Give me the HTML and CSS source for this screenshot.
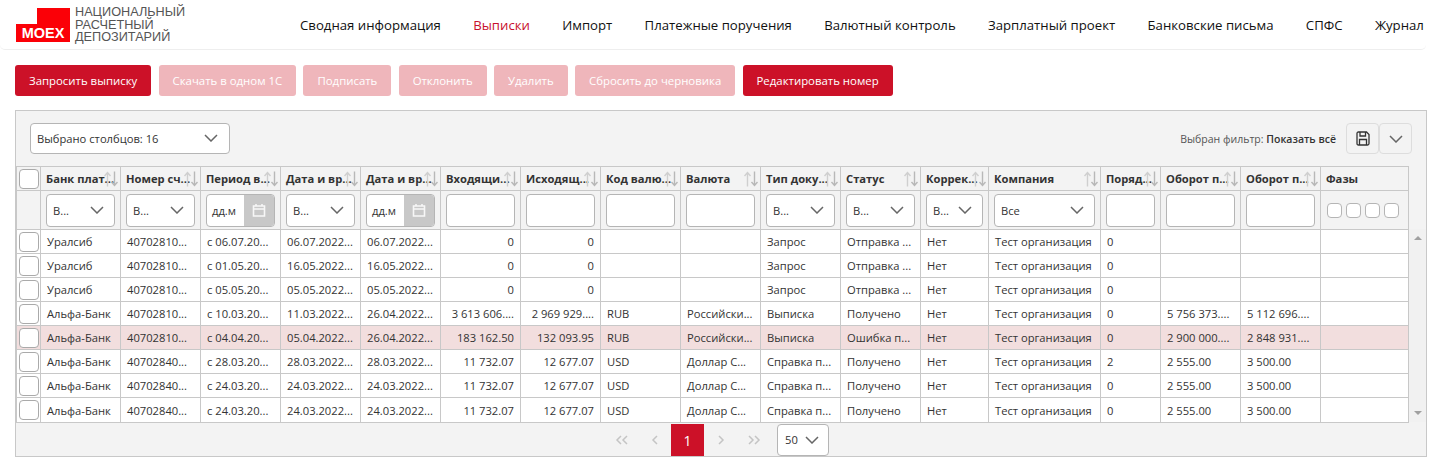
FILE: index.html
```html
<!DOCTYPE html>
<html lang="ru">
<head>
    <meta charset="UTF-8">
    <title>Выписки</title>
    <link rel="stylesheet" href="styles.css">
</head>
<body>
    <svg class="sprite" width="0" height="0">
        <symbol id="sort" viewBox="0 0 14 16">
            <path d="M3.5 15.5V1.5M0.5 5L3.5 1.5L6.5 5" fill="none" stroke="#cfcfcf" stroke-width="1.4"/>
            <path d="M10.5 0.5V14.5M7.5 11L10.5 14.5L13.5 11" fill="none" stroke="#b8b8b8" stroke-width="1.4"/>
        </symbol>
        <symbol id="chev" viewBox="0 0 14 8">
            <path d="M1 1L7 7L13 1" fill="none" stroke="#666" stroke-width="1.5"/>
        </symbol>
        <symbol id="cal" viewBox="0 0 14 14">
            <path d="M1.5 3H12.5V13H1.5ZM1.5 6H12.5M4 1V3M10 1V3" fill="none" stroke="#f7f7f7" stroke-width="1.6"/>
        </symbol>
    </svg>

    <header class="topbar">
        <div class="logo">
            <div class="logo-mark">MOEX</div>
            <div class="logo-text">НАЦИОНАЛЬНЫЙ<br>РАСЧЕТНЫЙ<br>ДЕПОЗИТАРИЙ</div>
        </div>
        <nav class="nav">
            <a>Сводная информация</a>
            <a class="active">Выписки</a>
            <a>Импорт</a>
            <a>Платежные поручения</a>
            <a>Валютный контроль</a>
            <a>Зарплатный проект</a>
            <a>Банковские письма</a>
            <a>СПФС</a>
            <a>Журнал</a>
        </nav>
    </header>

    <div class="actions">
        <button class="btn">Запросить выписку</button>
        <button class="btn off">Скачать в одном 1С</button>
        <button class="btn off">Подписать</button>
        <button class="btn off">Отклонить</button>
        <button class="btn off">Удалить</button>
        <button class="btn off">Сбросить до черновика</button>
        <button class="btn">Редактировать номер</button>
    </div>

    <section class="panel">
        <div class="toolbar">
            <div class="box cols-select">Выбрано столбцов: 16<svg class="chev"><use href="#chev"/></svg></div>
            <div class="filter-info">
                <span class="filter-label">Выбран фильтр: <b>Показать всё</b></span>
                <div class="tool-btn">
                    <svg width="14" height="15" viewBox="0 0 14 15"><path d="M1 2.5Q1 1 2.5 1H10.5L13 3.5V12.5Q13 14 11.5 14H2.5Q1 14 1 12.5ZM4 1V5H9.5V1M3.5 14V8.5H10.5V14" fill="none" stroke="#333" stroke-width="1.3"/></svg>
                </div>
                <div class="tool-btn"><svg class="chev-sm"><use href="#chev"/></svg></div>
            </div>
        </div>

        <div class="grid-wrap">
            <table class="grid">
                <colgroup>
                    <col class="c-check">
                    <col class="c80"><col class="c80"><col class="c80"><col class="c80"><col class="c80">
                    <col class="c80"><col class="c80"><col class="c80"><col class="c80"><col class="c80">
                    <col class="c80"><col class="c68"><col class="c112"><col class="c60"><col class="c80"><col class="c80"><col class="c88">
                </colgroup>
                <thead>
                    <tr class="head-row">
                        <th><span class="check"></span></th>
                        <th>Банк плат...<svg class="sort"><use href="#sort"/></svg></th>
                        <th>Номер сч...<svg class="sort"><use href="#sort"/></svg></th>
                        <th>Период в...<svg class="sort"><use href="#sort"/></svg></th>
                        <th>Дата и вр...<svg class="sort"><use href="#sort"/></svg></th>
                        <th>Дата и вр...<svg class="sort"><use href="#sort"/></svg></th>
                        <th>Входящи...<svg class="sort"><use href="#sort"/></svg></th>
                        <th>Исходящ...<svg class="sort"><use href="#sort"/></svg></th>
                        <th>Код валю...<svg class="sort"><use href="#sort"/></svg></th>
                        <th>Валюта<svg class="sort"><use href="#sort"/></svg></th>
                        <th>Тип доку...<svg class="sort"><use href="#sort"/></svg></th>
                        <th>Статус<svg class="sort"><use href="#sort"/></svg></th>
                        <th>Коррек...<svg class="sort"><use href="#sort"/></svg></th>
                        <th>Компания<svg class="sort"><use href="#sort"/></svg></th>
                        <th>Поряд...<svg class="sort"><use href="#sort"/></svg></th>
                        <th>Оборот п...<svg class="sort"><use href="#sort"/></svg></th>
                        <th>Оборот п...<svg class="sort"><use href="#sort"/></svg></th>
                        <th>Фазы</th>
                    </tr>
                    <tr class="filter-row">
                        <td></td>
                        <td><div class="box fsel">В...<svg class="chev"><use href="#chev"/></svg></div></td>
                        <td><div class="box fsel">В...<svg class="chev"><use href="#chev"/></svg></div></td>
                        <td><div class="box fdate"><span>дд.м</span><i><svg width="14" height="14"><use href="#cal"/></svg></i></div></td>
                        <td><div class="box fsel">В...<svg class="chev"><use href="#chev"/></svg></div></td>
                        <td><div class="box fdate"><span>дд.м</span><i><svg width="14" height="14"><use href="#cal"/></svg></i></div></td>
                        <td><div class="box"></div></td>
                        <td><div class="box"></div></td>
                        <td><div class="box"></div></td>
                        <td><div class="box"></div></td>
                        <td><div class="box fsel">В...<svg class="chev"><use href="#chev"/></svg></div></td>
                        <td><div class="box fsel">В...<svg class="chev"><use href="#chev"/></svg></div></td>
                        <td><div class="box fsel">В...<svg class="chev"><use href="#chev"/></svg></div></td>
                        <td><div class="box fsel">Все<svg class="chev"><use href="#chev"/></svg></div></td>
                        <td><div class="box"></div></td>
                        <td><div class="box"></div></td>
                        <td><div class="box"></div></td>
                        <td><div class="phases"><span></span><span></span><span></span><span></span></div></td>
                    </tr>
                </thead>
                <tbody>
                    <tr>
                        <td><span class="check"></span></td><td>Уралсиб</td><td>40702810...</td><td>с 06.07.20...</td><td>06.07.2022...</td><td>06.07.2022...</td>
                        <td class="num">0</td><td class="num">0</td><td></td><td></td><td>Запрос</td><td>Отправка ...</td><td>Нет</td><td>Тест организация</td><td>0</td><td></td><td></td><td></td>
                    </tr>
                    <tr>
                        <td><span class="check"></span></td><td>Уралсиб</td><td>40702810...</td><td>с 01.05.20...</td><td>16.05.2022...</td><td>16.05.2022...</td>
                        <td class="num">0</td><td class="num">0</td><td></td><td></td><td>Запрос</td><td>Отправка ...</td><td>Нет</td><td>Тест организация</td><td>0</td><td></td><td></td><td></td>
                    </tr>
                    <tr>
                        <td><span class="check"></span></td><td>Уралсиб</td><td>40702810...</td><td>с 05.05.20...</td><td>05.05.2022...</td><td>05.05.2022...</td>
                        <td class="num">0</td><td class="num">0</td><td></td><td></td><td>Запрос</td><td>Отправка ...</td><td>Нет</td><td>Тест организация</td><td>0</td><td></td><td></td><td></td>
                    </tr>
                    <tr>
                        <td><span class="check"></span></td><td>Альфа-Банк</td><td>40702810...</td><td>с 10.03.20...</td><td>11.03.2022...</td><td>26.04.2022...</td>
                        <td class="num">3 613 606....</td><td class="num">2 969 929....</td><td>RUB</td><td>Российски...</td><td>Выписка</td><td>Получено</td><td>Нет</td><td>Тест организация</td><td>0</td><td>5 756 373....</td><td>5 112 696....</td><td></td>
                    </tr>
                    <tr class="err">
                        <td><span class="check"></span></td><td>Альфа-Банк</td><td>40702810...</td><td>с 04.04.20...</td><td>05.04.2022...</td><td>26.04.2022...</td>
                        <td class="num">183 162.50</td><td class="num">132 093.95</td><td>RUB</td><td>Российски...</td><td>Выписка</td><td>Ошибка п...</td><td>Нет</td><td>Тест организация</td><td>0</td><td>2 900 000....</td><td>2 848 931....</td><td></td>
                    </tr>
                    <tr>
                        <td><span class="check"></span></td><td>Альфа-Банк</td><td>40702840...</td><td>с 28.03.20...</td><td>28.03.2022...</td><td>28.03.2022...</td>
                        <td class="num">11 732.07</td><td class="num">12 677.07</td><td>USD</td><td>Доллар С...</td><td>Справка п...</td><td>Получено</td><td>Нет</td><td>Тест организация</td><td>2</td><td>2 555.00</td><td>3 500.00</td><td></td>
                    </tr>
                    <tr>
                        <td><span class="check"></span></td><td>Альфа-Банк</td><td>40702840...</td><td>с 24.03.20...</td><td>24.03.2022...</td><td>24.03.2022...</td>
                        <td class="num">11 732.07</td><td class="num">12 677.07</td><td>USD</td><td>Доллар С...</td><td>Справка п...</td><td>Получено</td><td>Нет</td><td>Тест организация</td><td>0</td><td>2 555.00</td><td>3 500.00</td><td></td>
                    </tr>
                    <tr>
                        <td><span class="check"></span></td><td>Альфа-Банк</td><td>40702840...</td><td>с 24.03.20...</td><td>24.03.2022...</td><td>24.03.2022...</td>
                        <td class="num">11 732.07</td><td class="num">12 677.07</td><td>USD</td><td>Доллар С...</td><td>Справка п...</td><td>Получено</td><td>Нет</td><td>Тест организация</td><td>0</td><td>2 555.00</td><td>3 500.00</td><td></td>
                    </tr>
                </tbody>
            </table>
            <div class="scrollbar">
                <span class="arrow-up"></span>
                <span class="arrow-down"></span>
            </div>
        </div>

        <div class="pager">
            <a class="page"><svg width="14" height="10" viewBox="0 0 14 10"><path d="M6 1L2 5L6 9M12 1L8 5L12 9" fill="none" stroke="#c4c4c4" stroke-width="1.5"/></svg></a>
            <a class="page"><svg width="8" height="10" viewBox="0 0 8 10"><path d="M6 1L2 5L6 9" fill="none" stroke="#c4c4c4" stroke-width="1.5"/></svg></a>
            <a class="page current">1</a>
            <a class="page"><svg width="8" height="10" viewBox="0 0 8 10"><path d="M2 1L6 5L2 9" fill="none" stroke="#c4c4c4" stroke-width="1.5"/></svg></a>
            <a class="page"><svg width="14" height="10" viewBox="0 0 14 10"><path d="M2 1L6 5L2 9M8 1L12 5L8 9" fill="none" stroke="#c4c4c4" stroke-width="1.5"/></svg></a>
            <div class="box per-page">50<svg class="chev"><use href="#chev"/></svg></div>
        </div>
    </section>
</body>
</html>
```

FILE: styles.css
```css
body {
    margin: 0;
    background-color: #fff;
    font-family: "Open Sans", sans-serif;
    font-size: 11.2px;
    color: #333;
    overflow: hidden;
}
.sprite {
    position: absolute;
}

/* top bar */
.topbar {
    display: flex;
    height: 50px;
    width: 1426px;
    box-sizing: border-box;
    border-bottom: 1px solid #eee;
    border-radius: 0 0 5px 5px;
    overflow: hidden;
}
.logo {
    display: flex;
    width: 300px;
    flex-shrink: 0;
    padding-left: 16px;
    box-sizing: border-box;
}
.logo-mark {
    position: relative;
    align-self: flex-start;
    width: 54px;
    height: 18px;
    margin-top: 24px;
    background-color: #fb0007;
    color: #fff;
    font-family: "Liberation Sans", sans-serif;
    font-weight: bold;
    font-size: 14.5px;
    line-height: 18px;
    text-align: center;
}
.logo-mark::before {
    content: "";
    position: absolute;
    right: 0;
    top: -16px;
    width: 33px;
    height: 16px;
    background-color: #fb0007;
}
.logo-text {
    margin: 6px 0 0 5px;
    font-family: "Liberation Sans", sans-serif;
    font-size: 12.7px;
    line-height: 12.5px;
    color: #555;
}
.nav {
    display: flex;
    gap: 32.3px;
    white-space: nowrap;
    font-size: 13.2px;
    line-height: 50px;
    color: #111;
}
.nav .active {
    color: #c8102e;
}

/* action buttons */
.actions {
    display: flex;
    gap: 7.3px;
    margin: 15px 0 14px 15px;
}
.btn {
    height: 31px;
    padding: 0 14px;
    border: none;
    border-radius: 3px;
    background-color: #cc1128;
    color: #fff;
    font-family: "Open Sans", sans-serif;
    font-size: 11.4px;
}
.btn.off {
    background-color: #efb6bb;
}

/* panel with the grid */
.panel {
    width: 1412px;
    height: 347px;
    margin-left: 15px;
    box-sizing: border-box;
    border: 1px solid #c8c8c8;
    background-color: #f3f3f3;
}
.toolbar {
    display: flex;
    justify-content: space-between;
    align-items: center;
    height: 55px;
    padding: 0 14px 0 14px;
    box-sizing: border-box;
}
.box {
    position: relative;
    height: 33px;
    box-sizing: border-box;
    border: 1px solid #b5b5b5;
    border-radius: 4px;
    background-color: #fff;
    line-height: 31px;
}
.chev {
    position: absolute;
    right: 10px;
    top: 11px;
    width: 14px;
    height: 8px;
}
.chev-sm {
    width: 14px;
    height: 8px;
}
.cols-select {
    width: 200px;
    height: 31px;
    padding-left: 6px;
    line-height: 29px;
}
.cols-select .chev {
    right: 11px;
    top: 10px;
}
.filter-info {
    display: flex;
    align-items: center;
}
.filter-label {
    margin-right: 10px;
    font-size: 10.5px;
    color: #555;
}
.filter-label b {
    font-weight: 600;
    color: #333;
}
.tool-btn {
    display: flex;
    align-items: center;
    justify-content: center;
    width: 33px;
    height: 31px;
    box-sizing: border-box;
    border: 1px solid #ddd;
    border-radius: 4px;
}

.grid-wrap {
    display: flex;
}
.grid {
    width: 1393px;
    table-layout: fixed;
    border-collapse: collapse;
    background-color: #fff;
}
.c-check { width: 24px; }
.c60 { width: 60px; }
.c68 { width: 68px; }
.c80 { width: 80px; }
.c88 { width: 88px; }
.c112 { width: 112px; }
.grid th,
.grid td {
    border: 1px solid #c8c8c8;
    padding: 0 0 0 6px;
    overflow: hidden;
    white-space: nowrap;
    text-align: left;
}
.grid tbody tr {
    height: 24px;
}
.grid tbody tr:last-child {
    height: 25px;
}
.grid .num {
    padding: 0 6px 0 0;
    text-align: right;
}
.grid tr > :first-child {
    padding: 0;
    text-align: center;
}
.head-row {
    height: 24px;
    background-color: #f3f3f3;
}
.head-row th {
    position: relative;
    padding-left: 5px;
    font-weight: 700;
}
.sort {
    position: absolute;
    right: 2px;
    top: 4px;
    width: 14px;
    height: 16px;
}
.filter-row {
    height: 39px;
    background-color: #f3f3f3;
}
.filter-row td {
    padding: 0 5px;
}
.fsel {
    padding-left: 6px;
}
.fdate {
    display: flex;
    overflow: hidden;
}
.fdate span {
    flex: 1;
    padding-left: 5px;
}
.fdate i {
    display: flex;
    align-items: center;
    justify-content: center;
    width: 30px;
    background-color: #c8c8c8;
}
.phases {
    display: flex;
    gap: 4px;
    padding-left: 1px;
}
.phases span {
    width: 15px;
    height: 15px;
    box-sizing: border-box;
    border: 1px solid #b5b5b5;
    border-radius: 4px;
    background-color: #fff;
}
.check {
    display: block;
    width: 20px;
    height: 20px;
    margin: 0 auto;
    box-sizing: border-box;
    border: 1px solid #aaa;
    border-radius: 4px;
    background-color: #fff;
}
.err {
    background-color: #f2dede;
}

/* fake scrollbar */
.scrollbar {
    display: flex;
    flex-direction: column;
    justify-content: space-between;
    align-items: center;
    width: 17px;
    height: 193px;
    margin-top: 63px;
    padding: 7px 0;
    box-sizing: border-box;
    background-color: #f1f1f1;
}
.arrow-up,
.arrow-down {
    width: 0;
    height: 0;
    border-left: 4px solid transparent;
    border-right: 4px solid transparent;
}
.arrow-up {
    border-bottom: 4px solid #a0a0a0;
}
.arrow-down {
    border-top: 4px solid #a0a0a0;
}

/* pagination */
.pager {
    display: flex;
    justify-content: center;
    margin-top: 1px;
    padding-right: 8px;
}
.page {
    display: flex;
    align-items: center;
    justify-content: center;
    width: 33px;
    height: 32px;
    font-size: 14px;
}
.page.current {
    background-color: #cc1128;
    color: #fff;
}
.per-page {
    width: 52px;
    height: 32px;
    margin-left: 7px;
    padding-left: 7px;
    line-height: 30px;
}
.per-page .chev {
    right: 9px;
}
```
